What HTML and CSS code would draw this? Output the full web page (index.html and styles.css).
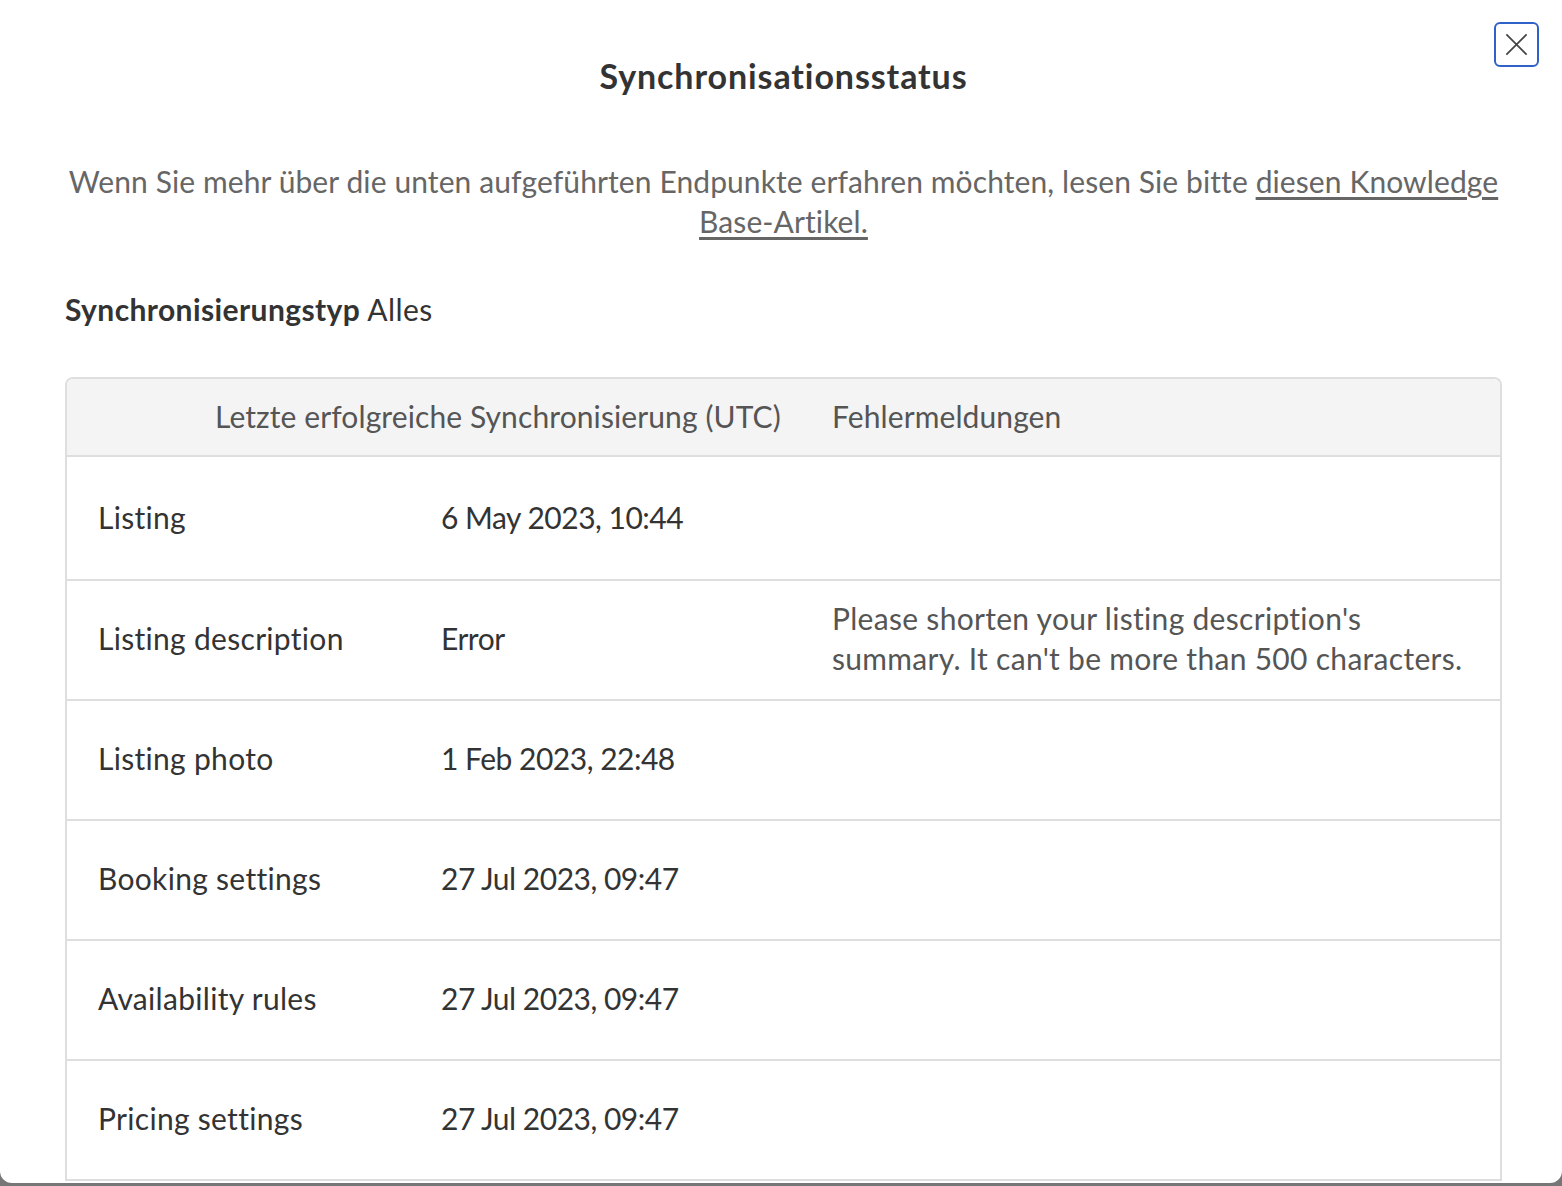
FILE: index.html
```html
<!DOCTYPE html>
<html lang="de">
<head>
<meta charset="utf-8">
<title>Synchronisationsstatus</title>
<link rel="stylesheet" href="styles.css">
</head>
<body>
<div class="modal">
  <button class="close" aria-label="Schließen">
    <svg viewBox="0 0 24 24" width="27" height="27"><path d="M3 3 L21 21 M21 3 L3 21" stroke="#444" stroke-width="1.5" fill="none"/></svg>
  </button>
  <h1 class="title">Synchronisationsstatus</h1>
  <p class="intro">Wenn Sie mehr über die unten aufgeführten Endpunkte erfahren möchten, lesen Sie bitte <a href="#">diesen Knowledge<br>Base-Artikel.</a></p>
  <p class="type"><strong>Synchronisierungstyp</strong> Alles</p>
  <div class="table">
    <div class="thead">
      <div class="th">Letzte erfolgreiche Synchronisierung (UTC)</div>
      <div class="th">Fehlermeldungen</div>
    </div>
    <div class="row first"><div class="c1">Listing</div><div class="c2">6 May 2023, 10:44</div><div class="c3"></div></div>
    <div class="row"><div class="c1">Listing description</div><div class="c2">Error</div><div class="c3 err">Please shorten your listing description's<br>summary. It can't be more than 500 characters.</div></div>
    <div class="row"><div class="c1">Listing photo</div><div class="c2">1 Feb 2023, 22:48</div><div class="c3"></div></div>
    <div class="row"><div class="c1">Booking settings</div><div class="c2">27 Jul 2023, 09:47</div><div class="c3"></div></div>
    <div class="row"><div class="c1">Availability rules</div><div class="c2">27 Jul 2023, 09:47</div><div class="c3"></div></div>
    <div class="row last"><div class="c1">Pricing settings</div><div class="c2">27 Jul 2023, 09:47</div><div class="c3"></div></div>
  </div>
</div>
</body>
</html>
```

FILE: styles.css
```css
html, body {
  margin: 0;
  padding: 0;
}
body {
  background: #767676;
  width: 1562px;
  height: 1186px;
  overflow: hidden;
  font-family: Lato, "Open Sans", sans-serif;
  color: #333;
}
.modal {
  position: relative;
  background: #fff;
  height: 1183px;
  overflow: hidden;
  box-sizing: border-box;
  padding: 56px 60px 0 65px;
  border-radius: 0 0 12px 12px;
}
.close {
  position: absolute;
  top: 22px;
  right: 23px;
  width: 45px;
  height: 45px;
  box-sizing: border-box;
  border: 2px solid #2f62c8;
  border-radius: 6px;
  background: #fff;
  padding: 0;
  display: flex;
  align-items: center;
  justify-content: center;
}
.title {
  margin: 0;
  font-size: 34px;
  line-height: 40px;
  font-weight: 700;
  text-align: center;
  color: #333;
  letter-spacing: 0.9px;
}
.intro {
  margin: 65px 0 0;
  font-size: 30px;
  line-height: 40px;
  text-align: center;
  color: #666;
  letter-spacing: 0.1px;
}
.intro a {
  color: #666;
  text-decoration: underline;
  text-underline-offset: 4px;
}
.type {
  margin: 48px 0 0;
  font-size: 30px;
  line-height: 40px;
  color: #333;
  letter-spacing: 0.4px;
}
.type strong {
  font-weight: 700;
}
.table {
  margin-top: 48px;
  border: 2px solid #dedede;
  border-bottom: none;
  border-radius: 8px 8px 0 0;
  overflow: hidden;
}
.thead {
  display: grid;
  grid-template-columns: 617px 1fr;
  height: 76px;
  box-sizing: border-box;
  padding-bottom: 2px;
  align-items: center;
  padding-left: 148px;
  background: #f4f4f4;
  font-size: 30px;
  color: #555;
  letter-spacing: 0.1px;
}
.row {
  display: grid;
  grid-template-columns: 343px 391px 1fr;
  height: 120px;
  box-sizing: border-box;
  border-top: 2px solid #dedede;
  padding-bottom: 5px;
  align-items: center;
  padding-left: 31px;
  font-size: 30px;
  line-height: 40px;
  color: #333;
}
.row.first {
  height: 124px;
  padding-bottom: 2px;
}
.row.last {
  height: 122px;
  border-bottom: 2px solid #dedede;
}
.c1 {
  letter-spacing: 0.3px;
}
.c2 {
  letter-spacing: -0.5px;
}
.err {
  color: #555;
  font-size: 30px;
  letter-spacing: 0.3px;
  white-space: nowrap;
}
```
